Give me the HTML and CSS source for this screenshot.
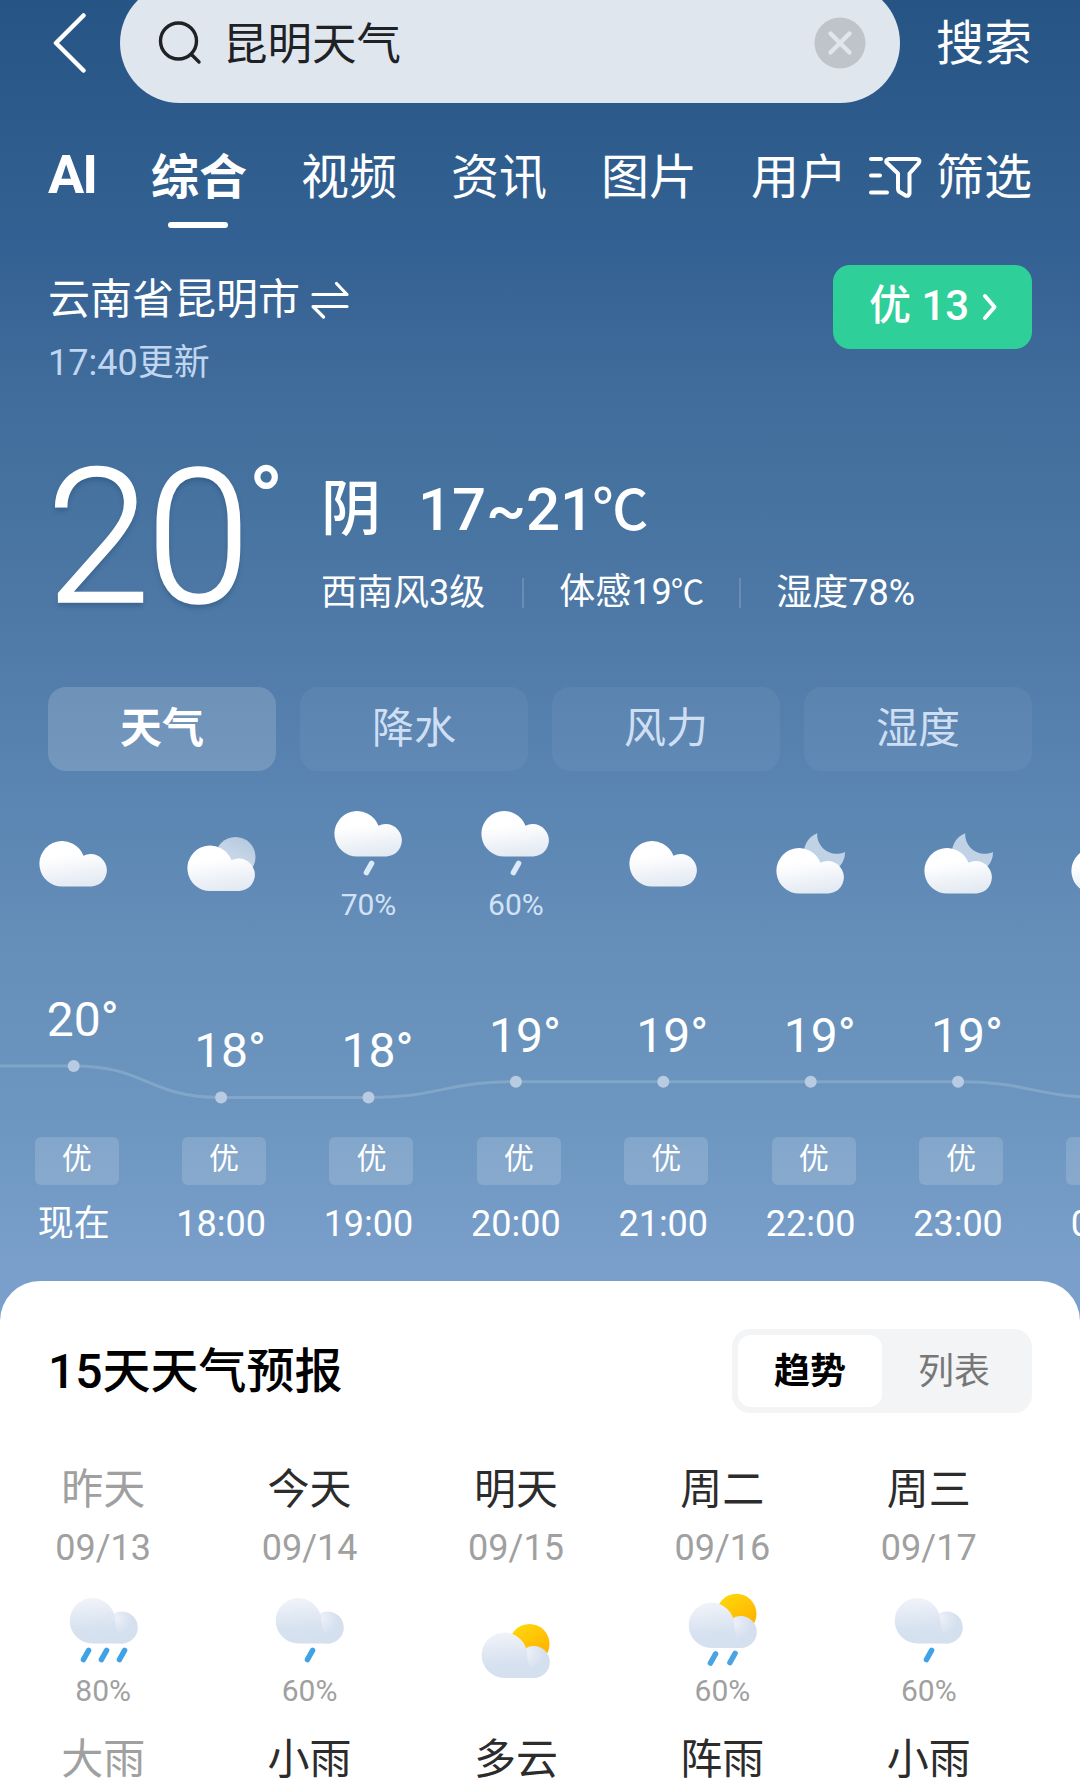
FILE: index.html
```html
<!DOCTYPE html>
<html lang="zh-CN">
<head>
    <meta charset="utf-8">
    <title>昆明天气</title>
    <meta name="viewport" content="width=device-width, initial-scale=1">
    <link rel="stylesheet" href="styles.css">
</head>
<body>
<!-- shared weather icons -->
<svg class="defs" width="0" height="0">
    <defs>
        <linearGradient id="whiteCloud" x1="0.4" y1="0" x2="0.6" y2="1">
            <stop offset="0.3" stop-color="#ffffff"/>
            <stop offset="1" stop-color="#e2e9f2"/>
        </linearGradient>
        <linearGradient id="blueCloud" x1="0.4" y1="0" x2="0.5" y2="1">
            <stop offset="0" stop-color="#f1f3f9"/>
            <stop offset="0.65" stop-color="#d7e2f0"/>
            <stop offset="1" stop-color="#d5e0ef"/>
        </linearGradient>
        <radialGradient id="puff" gradientUnits="userSpaceOnUse" cx="45" cy="20" r="17">
            <stop offset="0.1" stop-color="#eceff7"/>
            <stop offset="1" stop-color="#d5e0ef"/>
        </radialGradient>
        <linearGradient id="sunFill" x1="0.2" y1="0" x2="0.8" y2="1">
            <stop offset="0" stop-color="#ffd80a"/>
            <stop offset="1" stop-color="#ffab00"/>
        </linearGradient>
        <linearGradient id="paleSun" x1="0.8" y1="0" x2="0.3" y2="1">
            <stop offset="0" stop-color="#b3c8de"/>
            <stop offset="1" stop-color="#d9e4f0"/>
        </linearGradient>
        <path id="cloud" d="M22.5 45.5A22.75 22.75 0 1 1 43.5 14.8A16.2 16.2 0 1 1 51.5 45.5Z"/>
        <g id="dayCloud">
            <circle cx="51.8" cy="29.5" r="16" fill="url(#puff)"/>
            <path d="M22.5 45.5A22.75 22.75 0 1 1 45.2 22.7Q45.500 34 54 45.500Z" fill="url(#blueCloud)"/>
        </g>
        <path id="drop" d="M2.6 -4.6L-2.6 4.6" stroke-width="5.4" stroke-linecap="round"/>
    </defs>
    <symbol id="n-cloudy" viewBox="0 0 68 84">
        <use href="#cloud" y="35" fill="url(#whiteCloud)"/>
    </symbol>
    <symbol id="n-rain" viewBox="0 0 68 84">
        <use href="#cloud" y="5" fill="url(#whiteCloud)"/>
        <use href="#drop" x="34" y="62" stroke="#dbe9f8"/>
    </symbol>
    <symbol id="n-partly" viewBox="0 0 68 84">
        <circle cx="47.5" cy="51" r="20" fill="url(#paleSun)"/>
        <use href="#cloud" y="39.5" fill="url(#whiteCloud)"/>
    </symbol>
    <symbol id="n-moon" viewBox="0 0 68 84">
        <path d="M40.2 27.3A20.5 20.5 0 1 0 68 46A19.5 19.5 0 0 1 40.2 27.3Z" fill="#c0d2e5"/>
        <use href="#cloud" y="42" fill="url(#whiteCloud)"/>
    </symbol>
    <symbol id="d-heavy" viewBox="0 0 68 84">
        <use href="#dayCloud" y="5"/>
        <use href="#drop" x="16" y="62" stroke="#3fa2e6"/>
        <use href="#drop" x="34" y="62" stroke="#3fa2e6"/>
        <use href="#drop" x="52" y="62" stroke="#3fa2e6"/>
    </symbol>
    <symbol id="d-light" viewBox="0 0 68 84">
        <use href="#dayCloud" y="5"/>
        <use href="#drop" x="34" y="62" stroke="#3fa2e6"/>
    </symbol>
    <symbol id="d-partly" viewBox="0 0 68 84">
        <circle cx="47.5" cy="51" r="20" fill="url(#sunFill)"/>
        <use href="#dayCloud" y="39.5"/>
    </symbol>
    <symbol id="d-shower" viewBox="0 0 68 84">
        <circle cx="47.5" cy="20.8" r="20" fill="url(#sunFill)"/>
        <use href="#dayCloud" y="9.5"/>
        <use href="#drop" x="24" y="65.5" stroke="#4aa3e2"/>
        <use href="#drop" x="43.5" y="65" stroke="#4aa3e2"/>
    </symbol>
</svg>

<div class="page">
    <header class="topbar">
        <svg class="back" width="34" height="60" viewBox="0 0 34 60">
            <path d="M30.5 2.5L3 30L30.5 57.5" fill="none" stroke="#fff" stroke-width="4.5" stroke-linecap="round" stroke-linejoin="round"/>
        </svg>
        <div class="search">
            <svg width="44" height="44" viewBox="0 0 44 44" fill="none" stroke="#1f2225" stroke-width="3.4" stroke-linecap="round">
                <circle cx="20.5" cy="20" r="18"/>
                <path d="M34 34L41 41"/>
            </svg>
            <span class="query">昆明天气</span>
            <svg width="52" height="52" viewBox="0 0 52 52">
                <circle cx="26" cy="26" r="25.5" fill="#bfc4cb"/>
                <path d="M16.5 16.5L35.5 35.5M35.5 16.5L16.5 35.5" stroke="#e0e6ee" stroke-width="4.4" stroke-linecap="round"/>
            </svg>
        </div>
        <span class="go">搜索</span>
    </header>

    <nav class="tabs">
        <span class="ai">AI</span>
        <span class="tab active">综合</span>
        <span class="tab">视频</span>
        <span class="tab">资讯</span>
        <span class="tab">图片</span>
        <span class="tab last">用户</span>
        <span class="filter">
            <svg width="54" height="44" viewBox="0 0 54 44" fill="none" stroke="#fff" stroke-width="4" stroke-linecap="round" stroke-linejoin="round">
                <path d="M3 4H13M3 20.5H12M3 37.5H19"/>
                <path d="M21 4H48.5Q53 4.5 50.5 8.5L41.5 18.5V38.5Q40.5 41.5 37.5 40.5L31 36.5Q30 35.5 30 34V18.5L18.5 7.5Q17.5 4.5 21 4Z"/>
            </svg>
            筛选
        </span>
    </nav>

    <section class="place">
        <div>
            <div class="city">
                云南省昆明市
                <svg width="38" height="38" viewBox="0 0 38 38" fill="none" stroke="#fff" stroke-width="3.2" stroke-linecap="round" stroke-linejoin="round">
                    <path d="M2 13.5H36L25.5 2.5M36 25.5H2L12.5 36"/>
                </svg>
            </div>
            <div class="updated">17:40更新</div>
        </div>
        <div class="aqi">
            <span>优 13</span>
            <svg width="16" height="28" viewBox="0 0 16 28">
                <path d="M3 3L12.5 14L3 25" fill="none" stroke="#fff" stroke-width="4" stroke-linecap="round" stroke-linejoin="round"/>
            </svg>
        </div>
    </section>

    <section class="now">
        <div class="degree"><span class="num">20</span><span class="deg">°</span></div>
        <div class="summary">
            <div class="range"><span>阴</span><span>17~21<span class="unit">℃</span></span></div>
            <div class="details"><span>西南风3级</span><i></i><span>体感19<span class="unit">℃</span></span><i></i><span>湿度78%</span></div>
        </div>
    </section>

    <section class="chips">
        <span class="chip on">天气</span>
        <span class="chip">降水</span>
        <span class="chip">风力</span>
        <span class="chip">湿度</span>
    </section>

    <section class="hours">
        <svg class="curve" width="1080" height="60" viewBox="0 0 1080 60">
            <path d="M0 16H73.7C147 16 147 47.5 221 47.5H368.5C442 47.5 442 31.7 516 31.7H958C1032 31.7 1032 47.5 1105 47.5" fill="none" stroke="#fff" stroke-opacity="0.16" stroke-width="3"/>
            <g fill="#b9cbe1">
                <circle cx="73.7" cy="16" r="6"/>
                <circle cx="221.1" cy="47.5" r="6"/>
                <circle cx="368.5" cy="47.5" r="6"/>
                <circle cx="515.9" cy="31.7" r="6"/>
                <circle cx="663.3" cy="31.7" r="6"/>
                <circle cx="810.7" cy="31.7" r="6"/>
                <circle cx="958.1" cy="31.7" r="6"/>
            </g>
        </svg>
        <div class="hour">
            <svg class="icon"><use href="#n-cloudy"/></svg>
            <div class="prob"></div>
            <div class="temp t20">20°</div>
            <div class="tag">优</div>
            <div class="time">现在</div>
        </div>
        <div class="hour">
            <svg class="icon"><use href="#n-partly"/></svg>
            <div class="prob"></div>
            <div class="temp t18">18°</div>
            <div class="tag">优</div>
            <div class="time">18:00</div>
        </div>
        <div class="hour">
            <svg class="icon"><use href="#n-rain"/></svg>
            <div class="prob">70%</div>
            <div class="temp t18">18°</div>
            <div class="tag">优</div>
            <div class="time">19:00</div>
        </div>
        <div class="hour">
            <svg class="icon"><use href="#n-rain"/></svg>
            <div class="prob">60%</div>
            <div class="temp t19">19°</div>
            <div class="tag">优</div>
            <div class="time">20:00</div>
        </div>
        <div class="hour">
            <svg class="icon"><use href="#n-cloudy"/></svg>
            <div class="prob"></div>
            <div class="temp t19">19°</div>
            <div class="tag">优</div>
            <div class="time">21:00</div>
        </div>
        <div class="hour">
            <svg class="icon"><use href="#n-moon"/></svg>
            <div class="prob"></div>
            <div class="temp t19">19°</div>
            <div class="tag">优</div>
            <div class="time">22:00</div>
        </div>
        <div class="hour">
            <svg class="icon"><use href="#n-moon"/></svg>
            <div class="prob"></div>
            <div class="temp t19">19°</div>
            <div class="tag">优</div>
            <div class="time">23:00</div>
        </div>
        <div class="hour">
            <svg class="icon"><use href="#n-moon"/></svg>
            <div class="prob"></div>
            <div class="temp t18"></div>
            <div class="tag"></div>
            <div class="time">0:00</div>
        </div>
    </section>

    <section class="forecast">
        <div class="forecast-head">
            <h2>15天天气预报</h2>
            <div class="switch">
                <span class="on">趋势</span>
                <span>列表</span>
            </div>
        </div>
        <div class="days">
            <div class="day past">
                <div class="name">昨天</div>
                <div class="date">09/13</div>
                <svg class="icon"><use href="#d-heavy"/></svg>
                <div class="prob">80%</div>
                <div class="name">大雨</div>
            </div>
            <div class="day">
                <div class="name">今天</div>
                <div class="date">09/14</div>
                <svg class="icon"><use href="#d-light"/></svg>
                <div class="prob">60%</div>
                <div class="name">小雨</div>
            </div>
            <div class="day">
                <div class="name">明天</div>
                <div class="date">09/15</div>
                <svg class="icon"><use href="#d-partly"/></svg>
                <div class="prob"></div>
                <div class="name">多云</div>
            </div>
            <div class="day">
                <div class="name">周二</div>
                <div class="date">09/16</div>
                <svg class="icon"><use href="#d-shower"/></svg>
                <div class="prob">60%</div>
                <div class="name">阵雨</div>
            </div>
            <div class="day">
                <div class="name">周三</div>
                <div class="date">09/17</div>
                <svg class="icon"><use href="#d-light"/></svg>
                <div class="prob">60%</div>
                <div class="name">小雨</div>
            </div>
        </div>
    </section>
</div>
</body>
</html>
```
FILE: styles.css
```css
*{
    margin: 0;
    padding: 0;
    box-sizing: border-box;
}
body{
    font-family: Roboto, "Noto Sans CJK SC", sans-serif;
    color: #fff;
    overflow: hidden;
}
svg{
    display: block;
    flex: none;
}
symbol{
    overflow: visible;
}
.defs{
    position: absolute;
}
.page{
    display: flex;
    flex-direction: column;
    width: 1080px;
    height: 1788px;
    overflow: hidden;
    white-space: nowrap;
    background: linear-gradient(180deg, #265585 0, #2c5b8b 110px, #346193 250px, #406d9b 400px, #4d78a5 600px, #5882b0 760px, #648eb8 930px, #6d97c0 1130px, #7a9fcb 1270px, #7a9fcb 100%);
}

/* search bar */
.topbar{
    display: flex;
    align-items: center;
    height: 120px;
    margin-top: -17px;
    padding: 0 48px 0 53px;
}
.search{
    display: flex;
    align-items: center;
    width: 780px;
    height: 120px;
    margin-left: 33px;
    padding: 0 34px 0 38px;
    border-radius: 60px;
    background: #e0e6ee;
}
.query{
    flex: 1;
    margin-left: 21px;
    padding-bottom: 6px;
    font-size: 44.5px;
    color: #1f2225;
}
.go{
    margin-left: auto;
    padding-bottom: 8px;
    font-size: 48px;
}

/* tabs */
.tabs{
    display: flex;
    margin-top: 45px;
    padding: 0 48px;
    height: 80px;
    font-size: 48px;
    line-height: 60px;
}
.ai{
    flex: none;
    width: 103px;
    font-size: 54px;
    font-weight: 700;
    letter-spacing: -2px;
    line-height: 54px;
}
.tab{
    flex: none;
    width: 150px;
}
.tab.last{
    width: 96px;
}
.tab.active{
    font-weight: 700;
}
.tab.active::after{
    content: "";
    display: block;
    width: 60px;
    height: 6px;
    margin: 14px 0 0 17px;
    border-radius: 3px;
    background: #fff;
}
.filter{
    display: flex;
    align-items: center;
    height: 60px;
    margin-left: auto;
    gap: 14px;
}
.filter svg{
    margin-top: -2px;
}

/* location */
.place{
    display: flex;
    justify-content: space-between;
    margin-top: 37px;
    padding: 0 48px;
}
.city{
    display: flex;
    align-items: center;
    gap: 11px;
    padding-top: 5px;
    font-size: 42px;
    line-height: 60px;
}
.updated{
    margin-top: 11px;
    font-size: 36px;
    line-height: 44px;
    color: #c0d5f0;
}
.aqi{
    display: flex;
    align-items: center;
    gap: 13px;
    width: 199px;
    height: 84px;
    padding-left: 36px;
    border-radius: 17px;
    background: #2ecf98;
    font-size: 42px;
    font-weight: 500;
    line-height: 42px;
}
.aqi span{
    padding-bottom: 3px;
}

/* current weather */
.now{
    display: flex;
    height: 217px;
    margin-top: 85px;
    padding-left: 46px;
}
.degree{
    display: flex;
    width: 275px;
    height: 136px;
    line-height: 136px;
    text-shadow: 0 4px 5px rgba(30, 70, 110, 0.4);
}
.num{
    font-size: 188px;
    font-weight: 300;
    letter-spacing: -4px;
    -webkit-text-stroke: 1.5px #fff;
}
.deg{
    margin-left: 2px;
    font-size: 92px;
    font-weight: 500;
    line-height: 62px;
    text-shadow: none;
}
.summary{
    padding-top: 10px;
}
.range{
    display: flex;
    gap: 37px;
    font-size: 60px;
    font-weight: 500;
    line-height: 60px;
}
.unit{
    margin-left: -0.03em;
    font-size: 0.93em;
    letter-spacing: -0.06em;
}
.details{
    display: flex;
    align-items: center;
    margin-top: 33px;
    font-size: 36px;
    line-height: 36px;
}
.details i{
    width: 2px;
    height: 30px;
    margin: 0 35px 0 37px;
    background: rgba(255, 255, 255, 0.16);
}

/* chart switches */
.chips{
    display: flex;
    gap: 24px;
    padding: 0 48px;
}
.chip{
    width: 228px;
    height: 84px;
    border-radius: 18px;
    background: rgba(255, 255, 255, 0.05);
    color: #cfdff3;
    font-size: 42px;
    line-height: 84px;
    text-align: center;
}
.chip.on{
    background: rgba(255, 255, 255, 0.16);
    color: #fff;
    font-weight: 700;
}

/* hourly */
.hours{
    position: relative;
    display: flex;
    height: 475px;
    margin-top: 35px;
}
.curve{
    position: absolute;
    left: 0;
    top: 244px;
}
.hour{
    display: flex;
    flex: none;
    flex-direction: column;
    align-items: center;
    width: 147.4px;
}
.icon{
    width: 68px;
    height: 84px;
    margin-left: 1px;
    overflow: visible;
}
.prob{
    height: 30px;
    font-size: 30px;
    line-height: 30px;
}
.hour .prob{
    color: #d2e2f6;
}
.temp{
    height: 217px;
    padding-left: 18px;
    font-size: 48px;
    line-height: 48px;
}
.t20{
    padding-top: 76px;
}
.t19{
    padding-top: 92px;
}
.t18{
    padding-top: 107px;
}
.tag{
    width: 84px;
    height: 48px;
    margin-left: 6px;
    border-radius: 6px;
    background: rgba(255, 255, 255, 0.15);
    font-size: 30px;
    line-height: 44px;
    text-align: center;
}
.time{
    margin-top: 21px;
    font-size: 36px;
    line-height: 36px;
}

/* 15 day forecast */
.forecast{
    flex: 1;
    border-radius: 40px 40px 0 0;
    background: #fff;
    color: #2c2c2c;
}
.forecast-head{
    display: flex;
    justify-content: space-between;
    padding: 48px 48px 0;
}
h2{
    font-size: 48px;
    font-weight: 500;
    line-height: 86px;
    height: 84px;
    color: #000;
}
.switch{
    display: flex;
    width: 300px;
    height: 84px;
    padding: 6px;
    border-radius: 18px;
    background: #f3f4f6;
    font-size: 36px;
    line-height: 74px;
    color: #777;
}
.switch span{
    width: 144px;
    height: 72px;
    text-align: center;
}
.switch .on{
    border-radius: 13px;
    background: #fff;
    color: #000;
    font-weight: 700;
}
.days{
    display: flex;
    margin-top: 55px;
}
.day{
    display: flex;
    flex: none;
    flex-direction: column;
    align-items: center;
    width: 206.4px;
}
.name{
    font-size: 42px;
    line-height: 44px;
}
.date{
    margin: 18px 0 27px;
    font-size: 36px;
    line-height: 36px;
    color: #a0a0a0;
}
.day .prob{
    margin-top: -1px;
    color: #a0a0a0;
}
.day .prob + .name{
    margin-top: 32px;
}
.past{
    color: #a0a0a0;
}
```
